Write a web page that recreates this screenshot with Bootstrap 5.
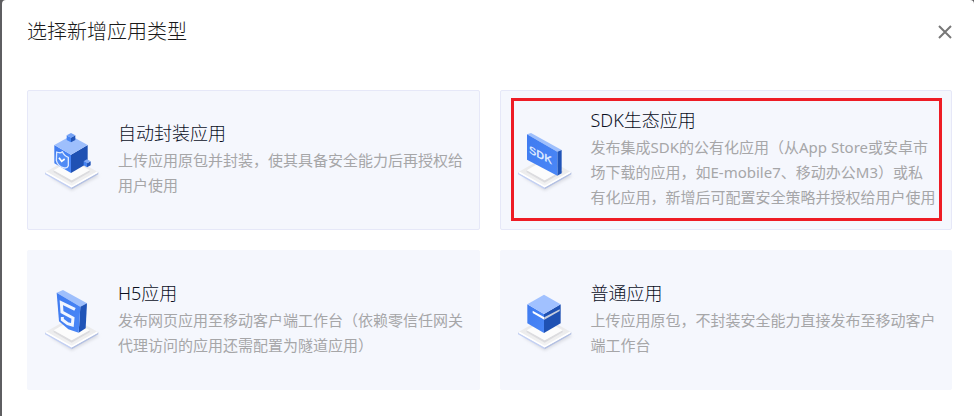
<!DOCTYPE html>
<html lang="zh-CN">
<head>
<meta charset="utf-8">
<meta name="viewport" content="width=device-width, initial-scale=1">
<title>选择新增应用类型</title>
<link rel="stylesheet" href="https://cdn.jsdelivr.net/npm/bootstrap@5.3.0/dist/css/bootstrap.min.css">
<style>
body { background: #5e5e61; font-family: "Noto Sans", "Noto Sans CJK SC", sans-serif; }
.app-dialog { margin-left: 2px; background: #fff; border-radius: 4px 4px 0 0; padding: 0 22px 26px 25px; }
.dialog-head { height: 64px; margin-bottom: 26px; }
.dialog-title { font-size: 20px; line-height: 28px; font-weight: 300; color: #1a1a1a; }
.close-btn { width: 14px; height: 14px; }
.type-grid { display: grid; grid-template-columns: 1fr 1fr; gap: 20px; }
.type-tile { height: 140px; background: #f5f7fd; border: 1px solid #f5f7fd; border-radius: 2px; padding: 0 14px 0 8px; gap: 12px; color: #111; }
.type-tile.outlined { border-color: #e6e8f8; }
.type-icon { width: 70px; height: 80px; }
.type-text { padding-bottom: 3px; }
.type-name { font-size: 18px; line-height: 26px; font-weight: 300; color: #0a0f1e; margin-bottom: 2px; }
.type-desc { font-size: 15px; line-height: 25px; font-weight: 400; color: #a6a6a8; }
.highlight { position: absolute; inset: 7px 9px 8px 10px; border: 3px solid #ee1c25; pointer-events: none; }
</style>
<script src="https://cdn.jsdelivr.net/npm/bootstrap@5.3.0/dist/js/bootstrap.bundle.min.js"></script>
</head>
<body>
<svg width="0" height="0" class="position-absolute" aria-hidden="true">
  <defs>
    <linearGradient id="face" x1="0" y1="0" x2="1" y2="1"><stop offset="0" stop-color="#3f7bf0"/><stop offset="1" stop-color="#4a87f7"/></linearGradient>
    <linearGradient id="plate" x1="0" y1="0" x2="0" y2="1"><stop offset="0" stop-color="#e6e6e8"/><stop offset="1" stop-color="#f3f3f3"/></linearGradient>
    <filter id="soft" x="-20%" y="-20%" width="140%" height="160%"><feGaussianBlur stdDeviation="4"/></filter>
    <symbol id="base" viewBox="0 0 210 240">
      <path d="M40 170L107 212L190 168L150 150Z" fill="#d9dbe2" filter="url(#soft)"/>
      <path d="M27 157L107 202V208L27 163Z" fill="#c3d0f4"/>
      <path d="M107 202L187 157V163L107 208Z" fill="#b3c0e3"/>
      <path d="M107 112L187 157L107 202L27 157Z" fill="url(#plate)"/>
      <path d="M30 157L107 200L184 157" fill="none" stroke="#fff" stroke-width="5"/>
      <path d="M53 151L107 181L161 151V157L107 188L53 157Z" fill="#dcdcdf"/>
      <path d="M107 120L161 151L107 181L53 151Z" fill="#fcfcfc"/>
    </symbol>
  </defs>
</svg>
<main class="app-dialog min-vh-100" role="dialog" aria-labelledby="dialogTitle">
  <header class="dialog-head d-flex align-items-center justify-content-between">
    <h1 class="dialog-title mb-0" id="dialogTitle">选择新增应用类型</h1>
    <button type="button" class="close-btn btn p-0 border-0 d-flex" aria-label="关闭">
      <svg viewBox="0 0 14 14" width="14" height="14"><path d="M1 1L13 13M13 1L1 13" stroke="#777" stroke-width="2" fill="none"/></svg>
    </button>
  </header>
  <div class="type-grid">
    <button type="button" class="type-tile outlined d-flex align-items-center text-start">
      <svg class="type-icon flex-shrink-0" viewBox="0 0 210 240" aria-hidden="true">
        <use href="#base" width="210" height="240"/>
        <path d="M55 75L105 104V159L55 130Z" fill="url(#face)"/>
        <path d="M105 104L155 75V130L105 159Z" fill="#1f51b3"/>
        <path d="M105 47L155 75L105 104L55 75Z" fill="#9ebffc"/>
        <path d="M92 46L105 53V67L92 60Z" fill="#4684f2"/><path d="M105 53L118 46V60L105 67Z" fill="#2255b8"/><path d="M105 39L118 46L105 53L92 46Z" fill="#75a2f5"/>
        <path d="M143 124L153 130V142L143 136Z" fill="#4684f2"/><path d="M153 130L164 124V136L153 142Z" fill="#2255b8"/><path d="M153 118L164 124L153 130L143 124Z" fill="#85adf8"/>
        <path d="M62 96Q73 101 79 95Q85 108 97 112V137Q94 145 85 144Q65 139 61 121Z" fill="#508bf5" stroke="#dce8ff" stroke-width="4" stroke-linejoin="round"/>
        <path d="M69 113L77 124L86 117" fill="none" stroke="#fff" stroke-width="5"/>
      </svg>
      <span class="type-text flex-fill">
        <span class="type-name d-block">自动封装应用</span>
        <span class="type-desc d-block">上传应用原包并封装，使其具备安全能力后再授权给用户使用</span>
      </span>
    </button>
    <button type="button" class="type-tile outlined d-flex align-items-center text-start position-relative">
      <svg class="type-icon flex-shrink-0" viewBox="0 0 210 240" aria-hidden="true">
        <use href="#base" width="210" height="240"/>
        <path d="M54 43L66 39L158 90L145 95Z" fill="#9ebffc"/>
        <path d="M145 95L158 90V160L145 167Z" fill="#2054b8"/>
        <path d="M54 43L145 95V167L54 119Z" fill="url(#face)"/>
        <text transform="matrix(1 .5 0 1 60 99)" font-family="Liberation Sans, sans-serif" font-size="33" font-weight="700" fill="#dce9ff">SDK</text>
      </svg>
      <span class="type-text flex-fill">
        <span class="type-name d-block">SDK生态应用</span>
        <span class="type-desc d-block">发布集成SDK的公有化应用（从App Store或安卓市场下载的应用，如E-mobile7、移动办公M3）或私有化应用，新增后可配置安全策略并授权给用户使用</span>
      </span>
      <span class="highlight"></span>
    </button>
    <button type="button" class="type-tile d-flex align-items-center text-start">
      <svg class="type-icon flex-shrink-0" viewBox="0 0 210 240" aria-hidden="true">
        <use href="#base" width="210" height="240"/>
        <path d="M62 38L81 30L153 70L133 80Z" fill="#9ebffc"/>
        <path d="M133 80L153 70L149 145L128 158Z" fill="#2054b8"/>
        <path d="M62 38L133 80L128 158L97 148L69 124Z" fill="url(#face)"/>
        <path d="M117 88L76 68L78 96L111 114L109 135L95 131L79 119V111" fill="none" stroke="#f2f6ff" stroke-width="9"/>
      </svg>
      <span class="type-text flex-fill">
        <span class="type-name d-block">H5应用</span>
        <span class="type-desc d-block">发布网页应用至移动客户端工作台（依赖零信任网关代理访问的应用还需配置为隧道应用）</span>
      </span>
    </button>
    <button type="button" class="type-tile d-flex align-items-center text-start">
      <svg class="type-icon flex-shrink-0" viewBox="0 0 210 240" aria-hidden="true">
        <use href="#base" width="210" height="240"/>
        <path d="M55 73L105 102V159L55 130Z" fill="url(#face)"/>
        <path d="M105 102L155 73V130L105 159Z" fill="#1f51b3"/>
        <path d="M105 44L155 73L105 102L55 73Z" fill="#a1c1ff"/>
        <path d="M71 92L106 112V119L71 99Z" fill="#fff"/>
        <path d="M106 112L152 88V93L106 119Z" fill="#c7cede"/>
      </svg>
      <span class="type-text flex-fill">
        <span class="type-name d-block">普通应用</span>
        <span class="type-desc d-block">上传应用原包，不封装安全能力直接发布至移动客户端工作台</span>
      </span>
    </button>
  </div>
</main>
</body>
</html>
